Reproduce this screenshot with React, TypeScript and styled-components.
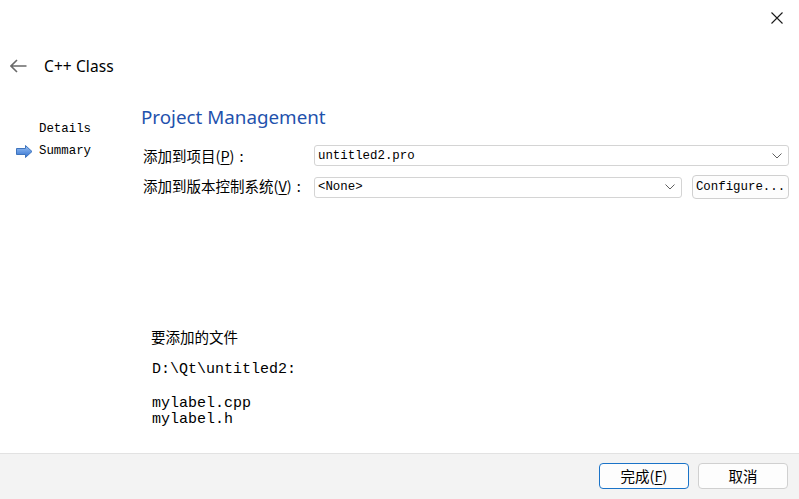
import React from "react";
import styled, { createGlobalStyle } from "styled-components";

const Global = createGlobalStyle`
  html, body { margin: 0; padding: 0; background: #ffffff; }
  #root { width: 799px; height: 499px; }
`;

const Window = styled.div`
  width: 799px;
  height: 499px;
  display: flex;
  flex-direction: column;
  background: #ffffff;
  overflow: hidden;
  font-family: "Noto Sans", "Noto Sans CJK SC", sans-serif;
  color: #000;
`;

const TitleBar = styled.div`
  height: 36px;
  display: flex;
  justify-content: flex-end;
  align-items: center;
  padding-right: 16px;
`;

const CloseButton = styled.div`
  width: 12px;
  height: 12px;
  display: flex;
`;

const Header = styled.div`
  height: 60px;
  display: flex;
  align-items: center;
  padding-left: 10px;
  gap: 17px;
`;

const HeaderTitle = styled.span`
  font-family: "Noto Sans", sans-serif;
  font-size: 15.5px;
  letter-spacing: 0.1px;
`;

const Main = styled.div`
  flex: 1;
  display: flex;
`;

const Sidebar = styled.div`
  width: 141px;
  padding-top: 22px;
  display: flex;
  flex-direction: column;
`;

const NavItem = styled.div`
  height: 22px;
  display: flex;
  align-items: center;
  padding-left: 16px;
  gap: 6px;
  font-family: "Liberation Mono", "Noto Sans CJK SC", monospace;
  font-size: 12.4px;
  color: #000;
`;

const NavIconSlot = styled.span`
  width: 17px;
  height: 13px;
  display: flex;
`;

const Content = styled.div`
  flex: 1;
  padding-top: 8px;
  padding-right: 10px;
  display: flex;
  flex-direction: column;
`;

const Title = styled.div`
  height: 26px;
  line-height: 26px;
  font-family: "Noto Sans", sans-serif;
  font-size: 18.8px;
  color: #1f52ad;
`;

const Form = styled.div`
  margin-top: 15px;
  display: grid;
  grid-template-columns: 171px 1fr;
  row-gap: 9px;
  padding-left: 2px;
`;

const Label = styled.div`
  height: 21px;
  display: flex;
  align-items: center;
  font-family: "Noto Sans CJK SC", sans-serif;
  font-size: 14.5px;
  white-space: nowrap;
`;

const Mnemonic = styled.span`
  text-decoration: underline;
  text-underline-offset: 2px;
`;

const Colon = styled.span`
  margin-left: 5px;
`;

const FieldRow = styled.div`
  display: flex;
  align-items: center;
  gap: 10px;
`;

const Combo = styled.div`
  flex: 1;
  height: 21px;
  box-sizing: border-box;
  border: 1px solid #d4d4d4;
  border-radius: 3px;
  background: #ffffff;
  display: flex;
  align-items: center;
  justify-content: space-between;
  padding: 0 6px 0 3px;
  font-family: "Liberation Mono", monospace;
  font-size: 12.4px;
`;

const Button = styled.div<{ $primary?: boolean; $mono?: boolean; $w?: number }>`
  width: ${(p) => (p.$w ? `${p.$w}px` : "auto")};
  height: ${(p) => (p.$mono ? 24 : 26)}px;
  box-sizing: border-box;
  border: 1px solid ${(p) => (p.$primary ? "#1a73c8" : "#d0d0d0")};
  border-radius: 4px;
  background: #fdfdfd;
  display: flex;
  align-items: center;
  justify-content: center;
  padding: 0 3px;
  font-family: ${(p) =>
    p.$mono ? `"Liberation Mono", monospace` : `"Noto Sans CJK SC", sans-serif`};
  font-size: ${(p) => (p.$mono ? "12.4px" : "14.5px")};
  white-space: nowrap;
`;

const Files = styled.div`
  margin-top: 128px;
  padding-left: 10px;
  display: flex;
  flex-direction: column;
`;

const FilesTitle = styled.div`
  height: 20px;
  line-height: 20px;
  font-family: "Noto Sans CJK SC", sans-serif;
  font-size: 14.5px;
  margin-bottom: 15px;
`;

const MonoLine = styled.div<{ $gap?: number }>`
  height: 16px;
  line-height: 16px;
  font-family: "Liberation Mono", monospace;
  font-size: 15px;
  margin-left: 1px;
  margin-bottom: ${(p) => p.$gap ?? 0}px;
  white-space: pre;
`;

const Footer = styled.div`
  height: 46px;
  box-sizing: border-box;
  border-top: 1px solid #e2e2e2;
  background: #f3f3f3;
  display: flex;
  align-items: center;
  justify-content: flex-end;
  padding: 0 11px 2px 0;
  gap: 9px;
`;

const Chevron = () => (
  <svg width="10" height="6" viewBox="0 0 10 6">
    <path d="M0.5 0.5 L5 5 L9.5 0.5" fill="none" stroke="#606060" strokeWidth="1" />
  </svg>
);

const NavArrow = () => (
  <svg width="17" height="13" viewBox="0 0 17 13">
    <defs>
      <linearGradient id="ag" x1="0" y1="0" x2="0" y2="1">
        <stop offset="0" stopColor="#9cc4f5" />
        <stop offset="1" stopColor="#2f6fd0" />
      </linearGradient>
    </defs>
    <path
      d="M0.5 3.5 H9.5 V0.5 L16 6.5 L9.5 12.5 V9.5 H0.5 Z"
      fill="url(#ag)"
      stroke="#3f74bd"
      strokeWidth="1"
    />
  </svg>
);

export default function App() {
  return (
    <>
      <Global />
      <Window>
        <TitleBar>
          <CloseButton>
            <svg width="12" height="12" viewBox="0 0 12 12">
              <path d="M0.5 0.5 L11.5 11.5 M11.5 0.5 L0.5 11.5" stroke="#1a1a1a" strokeWidth="1.1" />
            </svg>
          </CloseButton>
        </TitleBar>
        <Header>
          <svg width="17" height="14" viewBox="0 0 17 14">
            <path d="M1 7 H16.5 M7 1 L1 7 L7 13" fill="none" stroke="#6a6a6a" strokeWidth="1.6" />
          </svg>
          <HeaderTitle>C++ Class</HeaderTitle>
        </Header>
        <Main>
          <Sidebar>
            <NavItem>
              <NavIconSlot />
              Details
            </NavItem>
            <NavItem>
              <NavIconSlot>
                <NavArrow />
              </NavIconSlot>
              Summary
            </NavItem>
          </Sidebar>
          <Content>
            <Title>Project Management</Title>
            <Form>
              <Label>
                添加到项目(<Mnemonic>P</Mnemonic>)<Colon>:</Colon>
              </Label>
              <FieldRow>
                <Combo>
                  <span>untitled2.pro</span>
                  <Chevron />
                </Combo>
              </FieldRow>
              <Label>
                添加到版本控制系统(<Mnemonic>V</Mnemonic>)<Colon>:</Colon>
              </Label>
              <FieldRow>
                <Combo>
                  <span>&lt;None&gt;</span>
                  <Chevron />
                </Combo>
                <Button $mono $w={97}>Configure...</Button>
              </FieldRow>
            </Form>
            <Files>
              <FilesTitle>要添加的文件</FilesTitle>
              <MonoLine $gap={18}>D:\Qt\untitled2:</MonoLine>
              <MonoLine>mylabel.cpp</MonoLine>
              <MonoLine>mylabel.h</MonoLine>
            </Files>
          </Content>
        </Main>
        <Footer>
          <Button $primary $w={90}>
            完成(<Mnemonic>F</Mnemonic>)
          </Button>
          <Button $w={90}>取消</Button>
        </Footer>
      </Window>
    </>
  );
}
